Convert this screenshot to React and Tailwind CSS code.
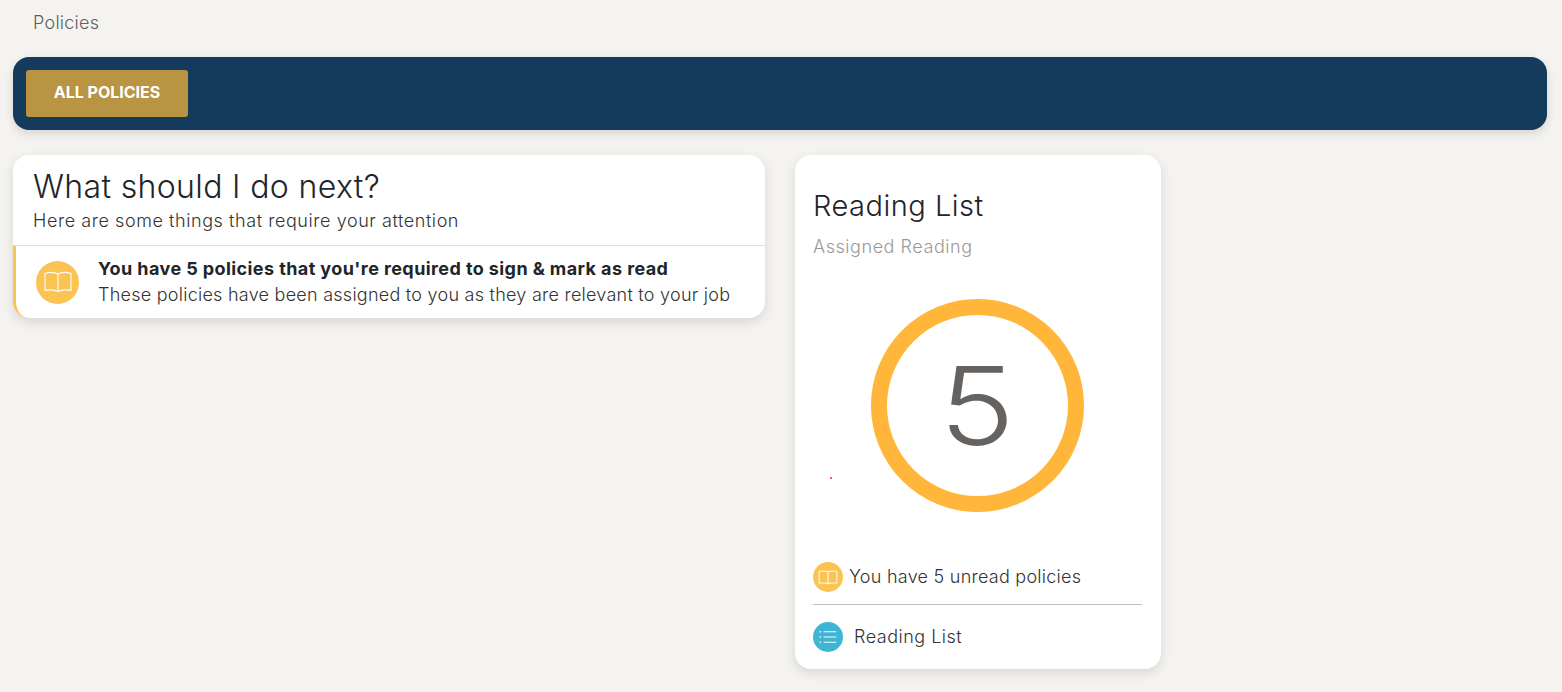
const font = 'font-["Inter","Noto_Sans",sans-serif]'

function BookIcon({ className, strokeWidth = 1.1 }) {
  return (
    <svg viewBox="0 0 28 22" fill="none" stroke="currentColor" strokeWidth={strokeWidth} strokeLinejoin="round" className={className}>
      <path d="M1 2.5C5.5 1 10 1 14 3C18 1 22.5 1 27 2.5V19.5C22.5 18.5 18 18.5 14 20.5C10 18.5 5.5 18.5 1 19.5Z" />
      <path d="M14 3V20.5" />
    </svg>
  )
}

function ListIcon({ className }) {
  return (
    <svg viewBox="0 0 20 16" fill="none" stroke="currentColor" strokeWidth={1.1} strokeLinecap="round" className={className}>
      <path d="M5.5 2H19M5.5 8H19M5.5 14H19" />
      <path d="M1 2H1.4M1 8H1.4M1 14H1.4" strokeWidth={1.6} />
    </svg>
  )
}

export default function App() {
  return (
    <div className={`min-h-[692px] bg-[#f4f3f0] pl-[13px] pr-[15px] text-[#212529] ${font}`}>
      <div className="pl-5 pt-3 text-[18px] leading-[22px] tracking-[0.25px] font-light text-[#5f5f5f]">Policies</div>

      <div className="mt-[23px] h-[73px] rounded-2xl bg-[#143a5c] p-[13px] shadow-[0_4px_10px_rgba(0,0,0,0.12)]">
        <button className="flex h-[47px] w-[162px] items-center justify-center rounded-[3px] bg-[#b99442] pb-[3px] text-[16px] font-bold tracking-[0px] text-white">
          ALL POLICIES
        </button>
      </div>

      <div className="mt-[25px] flex items-start gap-[30px]">
        <section className="w-[752px] rounded-2xl bg-white shadow-[0_4px_12px_rgba(0,0,0,0.12)]">
          <div className="h-[91px] border-b border-[#dedede] px-5 pt-[13px]">
            <h2 className="text-[32px] leading-[38px] font-light tracking-[0.36px] text-[#212529]">What should I do next?</h2>
            <p className="mt-[3px] text-[18px] leading-[24px] font-light tracking-[0.57px] text-[#333]">Here are some things that require your attention</p>
          </div>
          <div className="flex h-[72px] items-center gap-[19px] rounded-b-2xl border-l-[3px] border-[#fbc352] pl-5">
            <span className="flex h-[43px] w-[43px] items-center justify-center rounded-full bg-[#fbc352] text-white">
              <BookIcon className="h-[22px] w-[28px]" />
            </span>
            <div>
              <p className="text-[18px] leading-[26px] font-bold tracking-[0.41px] text-[#212529]">You have 5 policies that you're required to sign &amp; mark as read</p>
              <p className="text-[18px] leading-[26px] font-light tracking-[0.25px] text-[#333]">These policies have been assigned to you as they are relevant to your job</p>
            </div>
          </div>
        </section>

        <section className="relative flex h-[514px] w-[366px] flex-col rounded-2xl bg-white pl-[18px] pr-[19px] shadow-[0_4px_12px_rgba(0,0,0,0.12)]">
          <h2 className="mt-[33px] text-[29px] leading-[36px] font-light tracking-[0.5px] text-[#212529]">Reading List</h2>
          <p className="mt-[11px] text-[18px] leading-[24px] font-light tracking-[0.55px] text-[#999]">Assigned Reading</p>

          <div className="mt-[40px] flex justify-center">
            <div className="flex h-[213px] w-[213px] items-center justify-center rounded-full border-[16px] border-[#ffb63b]">
              <span className="scale-x-[1.18] text-[108px] leading-none font-light text-[#666260]">5</span>
            </div>
          </div>
          <span className="absolute left-[35px] top-[322px] h-[2px] w-[2px] rounded-full bg-[#e0302a]" />

          <div className="mt-[50px] flex h-[30px] items-center gap-[6px]">
            <span className="flex h-[30px] w-[30px] items-center justify-center rounded-full bg-[#fbc352] text-white">
              <BookIcon className="h-[15px] w-[20px]" strokeWidth={1.4} />
            </span>
            <span className="text-[18px] leading-[30px] font-light tracking-[0.25px] text-[#333]">You have 5 unread policies</span>
          </div>
          <div className="mt-[12px] border-b border-[#bdbdbd]" />
          <div className="mt-[17px] flex h-[30px] items-center gap-[11px]">
            <span className="flex h-[30px] w-[30px] items-center justify-center rounded-full bg-[#3eb5d3] text-white">
              <ListIcon className="h-[14px] w-[18px]" />
            </span>
            <span className="text-[18px] leading-[30px] font-light tracking-[0.5px] text-[#333]">Reading List</span>
          </div>
        </section>
      </div>
    </div>
  )
}
